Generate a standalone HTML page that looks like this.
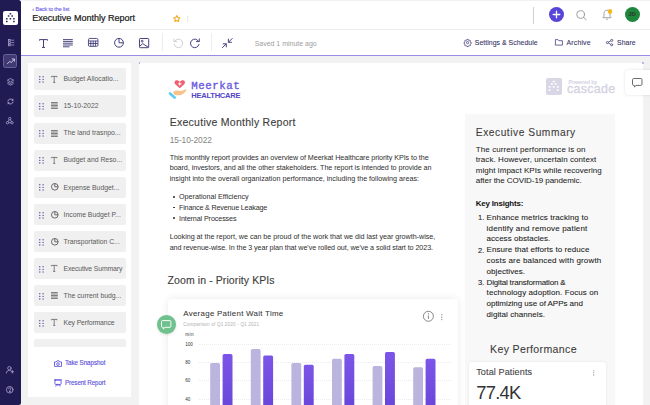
<!DOCTYPE html>
<html><head><meta charset="utf-8"><style>
html,body{margin:0;padding:0;}
body{width:650px;height:405px;overflow:hidden;position:relative;background:#f2f2f2;font-family:"Liberation Sans",sans-serif;}
</style></head><body>
<div style="position:absolute;left:0px;top:0px;width:650px;height:55.5px;background:#ffffff"></div>
<div style="position:absolute;left:21px;top:28.6px;width:629px;height:0.8px;background:#ececec"></div>
<div style="position:absolute;left:21px;top:0px;width:629px;height:0.8px;background:#f1f1f1"></div>
<div style="position:absolute;left:21px;top:55.1px;width:629px;height:1.0px;background:#988de2"></div>
<div style="position:absolute;left:0px;top:0px;width:21.2px;height:405px;background:#211b54;border-radius:0 2.5px 2.5px 0"></div>
<div style="position:absolute;left:28.2px;top:62.7px;width:103.0px;height:334.3px;background:#ffffff"></div>
<div style="position:absolute;left:138.7px;top:62.5px;width:504.3px;height:343px;background:#ffffff"></div>
<div style="position:absolute;left:138.6px;top:62.4px;width:1.6px;height:1.6px;background:#a79cf0;border-radius:1px"></div>
<div style="position:absolute;left:642.2px;top:62.4px;width:1.6px;height:1.6px;background:#a79cf0;border-radius:1px"></div>
<div style="position:absolute;left:3px;top:10.7px;width:14.8px;height:14.5px;background:#fff;border-radius:2px"></div>
<svg style="position:absolute;left:0px;top:0px;overflow:visible" width="21" height="30" viewBox="0 0 21 30"><rect x="9.6" y="13.100000000000001" width="1.6" height="1.4" fill="#211b54"/><rect x="7.8" y="15.3" width="1.6" height="1.4" fill="#211b54"/><rect x="11.399999999999999" y="15.3" width="1.6" height="1.4" fill="#211b54"/><rect x="6.0" y="18.1" width="1.6" height="1.4" fill="#211b54"/><rect x="9.6" y="18.1" width="1.6" height="1.4" fill="#211b54"/><rect x="13.1" y="18.1" width="1.6" height="1.4" fill="#211b54"/><rect x="6.0" y="20.8" width="1.6" height="1.4" fill="#211b54"/><rect x="13.1" y="20.8" width="1.6" height="1.4" fill="#211b54"/></svg>
<svg style="position:absolute;left:7.6px;top:39px;overflow:visible" width="6.4" height="7.2" viewBox="0 0 6.4 7.2"><g fill="none" stroke="#aaa6cf" stroke-width="0.75"><rect x="0.4" y="0.4" width="1.9" height="1.6"/><rect x="0.4" y="2.8" width="1.9" height="1.6"/><rect x="0.4" y="5.2" width="1.9" height="1.6"/><path d="M3.2 1.2H6.2M3.2 3.6H6.2M3.2 6H6.2"/></g></svg>
<div style="position:absolute;left:3.3px;top:54px;width:13.4px;height:13.8px;background:#403a73;border:0.8px solid #66619a;box-sizing:border-box;border-radius:2.2px"></div>
<svg style="position:absolute;left:6.5px;top:57.5px;overflow:visible" width="8" height="6.5" viewBox="0 0 8 6.5"><g fill="none" stroke="#d8d5ee" stroke-width="0.9" stroke-linecap="round" stroke-linejoin="round"><path d="M0.5 5.6L2.8 3.3L4.3 4.6L7.3 1.2"/><path d="M5.2 1H7.4V3.2"/></g></svg>
<svg style="position:absolute;left:6.5px;top:77.5px;overflow:visible" width="7" height="7.5" viewBox="0 0 7 7.5"><g fill="none" stroke="#aaa6cf" stroke-width="0.8" stroke-linejoin="round"><path d="M3.5 0.5L6.6 2.2L3.5 3.9L0.4 2.2Z"/><path d="M0.4 3.9L3.5 5.6L6.6 3.9"/><path d="M0.4 5.5L3.5 7.2L6.6 5.5"/></g></svg>
<svg style="position:absolute;left:6.5px;top:97.5px;overflow:visible" width="7" height="7" viewBox="0 0 7 7"><g fill="none" stroke="#aaa6cf" stroke-width="0.85" stroke-linecap="round"><path d="M0.9 3.1A2.7 2.7 0 0 1 5.6 1.9"/><path d="M6.1 3.9A2.7 2.7 0 0 1 1.4 5.1"/></g><g fill="#aaa6cf"><path d="M6.3 0.6V3L4.2 2.3Z"/><path d="M0.7 6.4V4L2.8 4.7Z"/></g></svg>
<svg style="position:absolute;left:6.3px;top:117.3px;overflow:visible" width="7.5" height="7.5" viewBox="0 0 7.5 7.5"><g fill="none" stroke="#aaa6cf" stroke-width="0.8"><circle cx="3.75" cy="1.6" r="1.2"/><circle cx="1.5" cy="5.7" r="1.2"/><circle cx="6" cy="5.7" r="1.2"/><path d="M3.2 2.7L2.1 4.6M4.3 2.7L5.4 4.6M2.7 5.7H4.8"/></g></svg>
<svg style="position:absolute;left:5.5px;top:366.3px;overflow:visible" width="8" height="7.5" viewBox="0 0 8 7.5"><g fill="none" stroke="#aaa6cf" stroke-width="0.8" stroke-linecap="round"><circle cx="3.4" cy="2.2" r="1.7"/><path d="M0.4 7C0.6 5 1.8 4.4 3.4 4.4C4.3 4.4 5 4.6 5.4 5"/><path d="M6.4 4.6V7M5.2 5.8H7.6"/></g></svg>
<svg style="position:absolute;left:5.6px;top:386.2px;overflow:visible" width="7.5" height="7.5" viewBox="0 0 7.5 7.5"><g fill="none" stroke="#aaa6cf" stroke-width="0.8" stroke-linecap="round"><circle cx="3.75" cy="3.75" r="3.3"/><path d="M2.7 2.8C2.7 2 3.2 1.7 3.8 1.7C4.4 1.7 4.9 2.1 4.9 2.7C4.9 3.5 3.8 3.6 3.8 4.5"/><circle cx="3.8" cy="5.7" r="0.3" fill="#aaa6cf"/></g></svg>
<svg style="position:absolute;left:173.2px;top:14.6px;overflow:visible" width="7.6" height="7.4" viewBox="0 0 7.6 7.4"><path d="M3.8 0.6L4.75 2.55L6.9 2.85L5.35 4.35L5.72 6.5L3.8 5.48L1.88 6.5L2.25 4.35L0.7 2.85L2.85 2.55Z" fill="none" stroke="#f4a91f" stroke-width="1.05" stroke-linejoin="round"/></svg>
<svg style="position:absolute;left:187px;top:15.5px;overflow:visible" width="1.6" height="6" viewBox="0 0 1.6 6"><g fill="#c4c4c4"><circle cx="0.8" cy="0.8" r="0.55"/><circle cx="0.8" cy="2.8" r="0.55"/><circle cx="0.8" cy="4.8" r="0.55"/></g></svg>
<div style="position:absolute;left:533.3px;top:7px;width:0.8px;height:16.6px;background:#cfcfcf"></div>
<div style="position:absolute;left:549px;top:7.3px;width:15px;height:15px;border-radius:50%;background:#5744d8"></div>
<svg style="position:absolute;left:549px;top:7.3px;overflow:visible" width="15" height="15" viewBox="0 0 15 15"><path d="M7.5 4.2V10.8M4.2 7.5H10.8" stroke="#fff" stroke-width="1.3" stroke-linecap="round"/></svg>
<svg style="position:absolute;left:576.4px;top:9.6px;overflow:visible" width="11" height="10.2" viewBox="0 0 11 10.2"><g fill="none" stroke="#8e8e8e" stroke-width="0.85" stroke-linecap="round"><circle cx="4.6" cy="4.5" r="3.9"/><path d="M7.5 7.3L10.1 9.7"/></g></svg>
<svg style="position:absolute;left:601.8px;top:9.4px;overflow:visible" width="11" height="11.5" viewBox="0 0 11 11.5"><g fill="none" stroke="#9a9a9a" stroke-width="0.9" stroke-linejoin="round"><path d="M5 1.2C3 1.2 2 2.8 2 4.6V7.3L0.9 8.7H9.1L8 7.3V4.6C8 2.8 7 1.2 5 1.2Z"/><path d="M3.9 9.8C4.2 10.5 5.8 10.5 6.1 9.8"/></g></svg>
<div style="position:absolute;left:608.3px;top:9.4px;width:4.2px;height:4.2px;border-radius:50%;background:#f6b515"></div>
<div style="position:absolute;left:625px;top:7.3px;width:15px;height:15px;border-radius:50%;background:#1f873b"></div>
<svg style="position:absolute;left:38.5px;top:38.5px;overflow:visible" width="9" height="9" viewBox="0 0 9 9"><g fill="none" stroke="#45417a" stroke-width="1"><path d="M0.5 1.6V0.6H8.5V1.6"/><path d="M4.5 0.6V8.4"/><path d="M3 8.4H6"/></g></svg>
<svg style="position:absolute;left:63.2px;top:38.8px;overflow:visible" width="10" height="8.5" viewBox="0 0 10 8.5"><g stroke="#45417a" stroke-width="0.95"><path d="M0 0.6H9.8M0 2.4H9.8M0 4.2H9.8M0 6H9.8M0 7.8H6.5"/></g></svg>
<svg style="position:absolute;left:88.4px;top:38.3px;overflow:visible" width="10.4" height="8.8" viewBox="0 0 10.4 8.8"><g fill="none" stroke="#45417a" stroke-width="0.9"><rect x="0.45" y="0.45" width="9.5" height="7.9" rx="1.3"/><path d="M0.5 3.0H9.9M0.5 5.5H9.9M2.8 3V8.3M5.2 3V8.3M7.6 3V8.3"/></g></svg>
<svg style="position:absolute;left:113.9px;top:38.4px;overflow:visible" width="10" height="9.5" viewBox="0 0 10 9.5"><g fill="none" stroke="#45417a" stroke-width="1"><circle cx="5" cy="4.8" r="4.4"/><path d="M5 0.4V4.8H9.4"/></g></svg>
<svg style="position:absolute;left:139.2px;top:38px;overflow:visible" width="10.2" height="10.2" viewBox="0 0 10.2 10.2"><g fill="none" stroke="#45417a" stroke-width="1"><rect x="0.5" y="0.5" width="9.2" height="9.2" rx="0.8"/><circle cx="3.2" cy="3.2" r="0.9"/><path d="M0.8 8.2L3.8 5.6L6 7.2L9.4 9.2"/></g></svg>
<div style="position:absolute;left:162.4px;top:33.4px;width:0.7px;height:17.6px;background:#ededed"></div>
<svg style="position:absolute;left:172.7px;top:38px;overflow:visible" width="10" height="10" viewBox="0 0 10 10"><g fill="none" stroke="#cfcfcf" stroke-width="1" stroke-linecap="round"><path d="M1.6 3.3A4.3 4.3 0 1 1 1.2 6.5"/><path d="M0.9 0.9V3.6H3.6"/></g></svg>
<svg style="position:absolute;left:190px;top:38px;overflow:visible" width="10.4" height="10" viewBox="0 0 10.4 10"><g fill="none" stroke="#45417a" stroke-width="1" stroke-linecap="round"><path d="M8.6 3.3A4.3 4.3 0 1 0 9 6.5"/><path d="M9.3 0.9V3.6H6.6"/></g></svg>
<div style="position:absolute;left:211.3px;top:33.4px;width:0.7px;height:17.2px;background:#ededed"></div>
<svg style="position:absolute;left:222px;top:37.7px;overflow:visible" width="10.7" height="10.1" viewBox="0 0 10.7 10.1"><g fill="none" stroke="#45417a" stroke-width="1" stroke-linecap="round"><path d="M10.2 0.5L6.6 4.1M6.4 1.2V4.3H9.5"/><path d="M0.5 9.6L4.1 6M1.2 5.8H4.3V8.9"/></g></svg>
<svg style="position:absolute;left:463.6px;top:38.9px;overflow:visible" width="7.2" height="7.2" viewBox="0 0 7.2 7.2"><g fill="none" stroke="#45417a" stroke-width="0.8"><circle cx="3.6" cy="3.6" r="1.1"/><path d="M3 0.4H4.2L4.4 1.2L5.1 1.5L5.8 1.1L6.6 1.9L6.2 2.6L6.5 3.3L7.2 3.5V4.6L6.5 4.8L6.2 5.5L6.6 6.2L5.8 7L5.1 6.6L4.4 6.9L4.2 7.6H3L2.8 6.9L2.1 6.6L1.4 7L0.6 6.2L1 5.5L0.7 4.8L0 4.6V3.5L0.7 3.3L1 2.6L0.6 1.9L1.4 1.1L2.1 1.5L2.8 1.2Z"/></g></svg>
<svg style="position:absolute;left:555.3px;top:39.1px;overflow:visible" width="7.8" height="6.6" viewBox="0 0 7.8 6.6"><g fill="none" stroke="#45417a" stroke-width="0.8" stroke-linejoin="round"><path d="M0.4 0.6H2.9L3.8 1.7H7.4V6.1H0.4Z"/></g></svg>
<svg style="position:absolute;left:606px;top:38.9px;overflow:visible" width="7.2" height="7.2" viewBox="0 0 7.2 7.2"><g fill="none" stroke="#45417a" stroke-width="0.8"><circle cx="5.7" cy="1.4" r="1.05"/><circle cx="1.4" cy="3.6" r="1.05"/><circle cx="5.7" cy="5.8" r="1.05"/><path d="M2.4 3.1L4.7 1.9M2.4 4.1L4.7 5.3"/></g></svg>
<div style="position:absolute;left:33.8px;top:68.3px;width:92.4px;height:21.3px;background:#f0f0f0;border-radius:2px"></div>
<svg style="position:absolute;left:38.9px;top:76.0px;overflow:visible" width="5" height="7" viewBox="0 0 5 7"><g fill="#5f59a3"><circle cx="0.75" cy="0.75" r="0.72"/><circle cx="0.75" cy="3.4" r="0.72"/><circle cx="0.75" cy="6.05" r="0.72"/><circle cx="4.1" cy="0.75" r="0.72"/><circle cx="4.1" cy="3.4" r="0.72"/><circle cx="4.1" cy="6.05" r="0.72"/></g></svg>
<svg style="position:absolute;left:51.2px;top:75.5px;overflow:visible" width="6.4" height="6.8" viewBox="0 0 6.4 6.8"><g fill="none" stroke="#5a5a5a" stroke-width="0.75"><path d="M0.4 1.3V0.4H6V1.3M3.2 0.4V6.4M2.1 6.4H4.3"/></g></svg>
<div style="position:absolute;left:33.8px;top:95.4px;width:92.4px;height:21.3px;background:#f0f0f0;border-radius:2px"></div>
<svg style="position:absolute;left:38.9px;top:103.1px;overflow:visible" width="5" height="7" viewBox="0 0 5 7"><g fill="#5f59a3"><circle cx="0.75" cy="0.75" r="0.72"/><circle cx="0.75" cy="3.4" r="0.72"/><circle cx="0.75" cy="6.05" r="0.72"/><circle cx="4.1" cy="0.75" r="0.72"/><circle cx="4.1" cy="3.4" r="0.72"/><circle cx="4.1" cy="6.05" r="0.72"/></g></svg>
<svg style="position:absolute;left:51.0px;top:102.4px;overflow:visible" width="6.8" height="7.0" viewBox="0 0 6.8 7.0"><g stroke="#5a5a5a" stroke-width="0.75"><path d="M0 0.5H6.8M0 2H6.8M0 3.5H6.8M0 5H6.8M0 6.5H6.8"/></g></svg>
<div style="position:absolute;left:33.8px;top:122.5px;width:92.4px;height:21.3px;background:#f0f0f0;border-radius:2px"></div>
<svg style="position:absolute;left:38.9px;top:130.2px;overflow:visible" width="5" height="7" viewBox="0 0 5 7"><g fill="#5f59a3"><circle cx="0.75" cy="0.75" r="0.72"/><circle cx="0.75" cy="3.4" r="0.72"/><circle cx="0.75" cy="6.05" r="0.72"/><circle cx="4.1" cy="0.75" r="0.72"/><circle cx="4.1" cy="3.4" r="0.72"/><circle cx="4.1" cy="6.05" r="0.72"/></g></svg>
<svg style="position:absolute;left:51.0px;top:129.5px;overflow:visible" width="6.8" height="7.0" viewBox="0 0 6.8 7.0"><g stroke="#5a5a5a" stroke-width="0.75"><path d="M0 0.5H6.8M0 2H6.8M0 3.5H6.8M0 5H6.8M0 6.5H6.8"/></g></svg>
<div style="position:absolute;left:33.8px;top:149.6px;width:92.4px;height:21.3px;background:#f0f0f0;border-radius:2px"></div>
<svg style="position:absolute;left:38.9px;top:157.3px;overflow:visible" width="5" height="7" viewBox="0 0 5 7"><g fill="#5f59a3"><circle cx="0.75" cy="0.75" r="0.72"/><circle cx="0.75" cy="3.4" r="0.72"/><circle cx="0.75" cy="6.05" r="0.72"/><circle cx="4.1" cy="0.75" r="0.72"/><circle cx="4.1" cy="3.4" r="0.72"/><circle cx="4.1" cy="6.05" r="0.72"/></g></svg>
<svg style="position:absolute;left:51.2px;top:156.8px;overflow:visible" width="6.4" height="6.8" viewBox="0 0 6.4 6.8"><g fill="none" stroke="#5a5a5a" stroke-width="0.75"><path d="M0.4 1.3V0.4H6V1.3M3.2 0.4V6.4M2.1 6.4H4.3"/></g></svg>
<div style="position:absolute;left:33.8px;top:176.7px;width:92.4px;height:21.3px;background:#f0f0f0;border-radius:2px"></div>
<svg style="position:absolute;left:38.9px;top:184.4px;overflow:visible" width="5" height="7" viewBox="0 0 5 7"><g fill="#5f59a3"><circle cx="0.75" cy="0.75" r="0.72"/><circle cx="0.75" cy="3.4" r="0.72"/><circle cx="0.75" cy="6.05" r="0.72"/><circle cx="4.1" cy="0.75" r="0.72"/><circle cx="4.1" cy="3.4" r="0.72"/><circle cx="4.1" cy="6.05" r="0.72"/></g></svg>
<svg style="position:absolute;left:50.6px;top:183.4px;overflow:visible" width="7.6" height="7.6" viewBox="0 0 7.6 7.6"><g fill="none" stroke="#5a5a5a" stroke-width="0.9"><circle cx="3.8" cy="3.8" r="3.3"/><path d="M3.8 0.5V3.8H7.1"/></g></svg>
<div style="position:absolute;left:33.8px;top:203.8px;width:92.4px;height:21.3px;background:#f0f0f0;border-radius:2px"></div>
<svg style="position:absolute;left:38.9px;top:211.5px;overflow:visible" width="5" height="7" viewBox="0 0 5 7"><g fill="#5f59a3"><circle cx="0.75" cy="0.75" r="0.72"/><circle cx="0.75" cy="3.4" r="0.72"/><circle cx="0.75" cy="6.05" r="0.72"/><circle cx="4.1" cy="0.75" r="0.72"/><circle cx="4.1" cy="3.4" r="0.72"/><circle cx="4.1" cy="6.05" r="0.72"/></g></svg>
<svg style="position:absolute;left:50.6px;top:210.5px;overflow:visible" width="7.6" height="7.6" viewBox="0 0 7.6 7.6"><g fill="none" stroke="#5a5a5a" stroke-width="0.9"><circle cx="3.8" cy="3.8" r="3.3"/><path d="M3.8 0.5V3.8H7.1"/></g></svg>
<div style="position:absolute;left:33.8px;top:230.9px;width:92.4px;height:21.3px;background:#f0f0f0;border-radius:2px"></div>
<svg style="position:absolute;left:38.9px;top:238.6px;overflow:visible" width="5" height="7" viewBox="0 0 5 7"><g fill="#5f59a3"><circle cx="0.75" cy="0.75" r="0.72"/><circle cx="0.75" cy="3.4" r="0.72"/><circle cx="0.75" cy="6.05" r="0.72"/><circle cx="4.1" cy="0.75" r="0.72"/><circle cx="4.1" cy="3.4" r="0.72"/><circle cx="4.1" cy="6.05" r="0.72"/></g></svg>
<svg style="position:absolute;left:50.6px;top:237.6px;overflow:visible" width="7.6" height="7.6" viewBox="0 0 7.6 7.6"><g fill="none" stroke="#5a5a5a" stroke-width="0.9"><circle cx="3.8" cy="3.8" r="3.3"/><path d="M3.8 0.5V3.8H7.1"/></g></svg>
<div style="position:absolute;left:33.8px;top:258.0px;width:92.4px;height:21.3px;background:#f0f0f0;border-radius:2px"></div>
<svg style="position:absolute;left:38.9px;top:265.7px;overflow:visible" width="5" height="7" viewBox="0 0 5 7"><g fill="#5f59a3"><circle cx="0.75" cy="0.75" r="0.72"/><circle cx="0.75" cy="3.4" r="0.72"/><circle cx="0.75" cy="6.05" r="0.72"/><circle cx="4.1" cy="0.75" r="0.72"/><circle cx="4.1" cy="3.4" r="0.72"/><circle cx="4.1" cy="6.05" r="0.72"/></g></svg>
<svg style="position:absolute;left:51.2px;top:265.2px;overflow:visible" width="6.4" height="6.8" viewBox="0 0 6.4 6.8"><g fill="none" stroke="#5a5a5a" stroke-width="0.75"><path d="M0.4 1.3V0.4H6V1.3M3.2 0.4V6.4M2.1 6.4H4.3"/></g></svg>
<div style="position:absolute;left:33.8px;top:285.1px;width:92.4px;height:21.3px;background:#f0f0f0;border-radius:2px"></div>
<svg style="position:absolute;left:38.9px;top:292.8px;overflow:visible" width="5" height="7" viewBox="0 0 5 7"><g fill="#5f59a3"><circle cx="0.75" cy="0.75" r="0.72"/><circle cx="0.75" cy="3.4" r="0.72"/><circle cx="0.75" cy="6.05" r="0.72"/><circle cx="4.1" cy="0.75" r="0.72"/><circle cx="4.1" cy="3.4" r="0.72"/><circle cx="4.1" cy="6.05" r="0.72"/></g></svg>
<svg style="position:absolute;left:51.0px;top:292.1px;overflow:visible" width="6.8" height="7.0" viewBox="0 0 6.8 7.0"><g stroke="#5a5a5a" stroke-width="0.75"><path d="M0 0.5H6.8M0 2H6.8M0 3.5H6.8M0 5H6.8M0 6.5H6.8"/></g></svg>
<div style="position:absolute;left:33.8px;top:312.2px;width:92.4px;height:21.3px;background:#f0f0f0;border-radius:2px"></div>
<svg style="position:absolute;left:38.9px;top:319.9px;overflow:visible" width="5" height="7" viewBox="0 0 5 7"><g fill="#5f59a3"><circle cx="0.75" cy="0.75" r="0.72"/><circle cx="0.75" cy="3.4" r="0.72"/><circle cx="0.75" cy="6.05" r="0.72"/><circle cx="4.1" cy="0.75" r="0.72"/><circle cx="4.1" cy="3.4" r="0.72"/><circle cx="4.1" cy="6.05" r="0.72"/></g></svg>
<svg style="position:absolute;left:51.2px;top:319.4px;overflow:visible" width="6.4" height="6.8" viewBox="0 0 6.4 6.8"><g fill="none" stroke="#5a5a5a" stroke-width="0.75"><path d="M0.4 1.3V0.4H6V1.3M3.2 0.4V6.4M2.1 6.4H4.3"/></g></svg>
<div style="position:absolute;left:33.8px;top:339.3px;width:92.4px;height:7.4px;background:#f0f0f0;border-radius:2px 2px 0 0"></div>
<svg style="position:absolute;left:53.8px;top:359.5px;overflow:visible" width="8" height="7" viewBox="0 0 8 7"><g fill="none" stroke="#5b4fd9" stroke-width="0.85" stroke-linejoin="round"><path d="M0.5 2H2.2L3 0.8H5L5.8 2H7.5V6.4H0.5Z"/><circle cx="4" cy="4.1" r="1.3"/></g></svg>
<svg style="position:absolute;left:53.8px;top:378.6px;overflow:visible" width="8" height="7.8" viewBox="0 0 8 7.8"><g fill="none" stroke="#5b4fd9" stroke-width="0.85" stroke-linejoin="round" stroke-linecap="round"><rect x="0.9" y="1.0" width="6.2" height="4.4" rx="0.5"/><path d="M0.3 0.9H7.7M2.6 5.4L1.9 7.2M5.4 5.4L6.1 7.2M4 5.4V6.6"/></g></svg>
<svg style="position:absolute;left:167px;top:78.5px;overflow:visible" width="21" height="21" viewBox="0 0 21 21"><path d="M12.75 9.2L8.5 5.4C7.2 4.2 7.2 2.3 8.6 1.5C10.1 0.8 11.7 1.5 12.75 2.7C13.8 1.5 15.4 0.8 16.9 1.5C18.3 2.3 18.3 4.2 17 5.4Z" fill="#f25f70"/><path d="M12.75 2.5L13.45 4.2L15.1 4.9L13.45 5.6L12.75 7.3L12.05 5.6L10.4 4.9L12.05 4.2Z" fill="#eef6ff"/><path d="M5.9 13.4C7.4 11.4 9.9 11.0 12 11.8L14.4 12.0C16.1 11.6 17.8 10.8 19.4 10.1C19.7 11.5 17.6 14.7 14.2 15.9C12 16.5 9.6 16.5 7.6 15.7Z" fill="#f8c28b"/><path d="M3.0 14.4L7.6 18.6" stroke="#5ccdf3" stroke-width="2.7" stroke-linecap="round"/></svg>
<div style="position:absolute;left:545.8px;top:78px;width:15.8px;height:17px;background:#d9d7e6;border-radius:2px"></div>
<svg style="position:absolute;left:0px;top:0px;overflow:visible" width="650" height="100" viewBox="0 0 650 100"><rect x="552.8000000000001" y="80.8" width="1.8" height="1.6" fill="#fff"/><rect x="550.9" y="83.2" width="1.8" height="1.6" fill="#fff"/><rect x="554.7" y="83.2" width="1.8" height="1.6" fill="#fff"/><rect x="548.7" y="86.10000000000001" width="1.8" height="1.6" fill="#fff"/><rect x="552.8000000000001" y="86.10000000000001" width="1.8" height="1.6" fill="#fff"/><rect x="556.9" y="86.10000000000001" width="1.8" height="1.6" fill="#fff"/><rect x="548.7" y="89.3" width="1.8" height="1.6" fill="#fff"/><rect x="556.9" y="89.3" width="1.8" height="1.6" fill="#fff"/></svg>
<div style="position:absolute;left:625.2px;top:70.4px;width:30px;height:25px;background:#fff;border-radius:4px 0 0 4px;box-shadow:0 0 3px rgba(0,0,0,0.12)"></div>
<svg style="position:absolute;left:632.4px;top:77.8px;overflow:visible" width="10.5" height="9.8" viewBox="0 0 10.5 9.8"><path d="M1.6 0.5H8.9C9.5 0.5 10 1 10 1.6V6.3C10 6.9 9.5 7.4 8.9 7.4H4L2.4 9V7.4H1.6C1 7.4 0.5 6.9 0.5 6.3V1.6C0.5 1 1 0.5 1.6 0.5Z" fill="none" stroke="#5a5a5a" stroke-width="0.9" stroke-linejoin="round"/></svg>
<div style="position:absolute;left:172.7px;top:195.79999999999998px;width:1.9px;height:1.9px;border-radius:50%;background:#2a2a2a"></div>
<div style="position:absolute;left:172.7px;top:206.6px;width:1.9px;height:1.9px;border-radius:50%;background:#2a2a2a"></div>
<div style="position:absolute;left:172.7px;top:217.4px;width:1.9px;height:1.9px;border-radius:50%;background:#2a2a2a"></div>
<div style="position:absolute;left:167.5px;top:299.2px;width:290.2px;height:120px;background:#fff;border-radius:4px;box-shadow:0 0 8px rgba(0,0,0,0.09)"></div>
<div style="position:absolute;left:157px;top:314.8px;width:19.2px;height:19.2px;border-radius:50%;background:#6fc18d;box-shadow:0 1px 3px rgba(0,0,0,0.12)"></div>
<svg style="position:absolute;left:161.3px;top:319.5px;overflow:visible" width="10.5" height="10" viewBox="0 0 10.5 10"><path d="M1.4 0.6H9C9.5 0.6 9.9 1 9.9 1.5V6.4C9.9 6.9 9.5 7.3 9 7.3H4.1L2.3 9V7.3H1.4C0.9 7.3 0.5 6.9 0.5 6.4V1.5C0.5 1 0.9 0.6 1.4 0.6Z" fill="none" stroke="#fff" stroke-width="0.95" stroke-linejoin="round"/></svg>
<div style="position:absolute;left:199px;top:343.5px;width:252px;height:0;border-top:0.8px dotted #ececec"></div>
<div style="position:absolute;left:199px;top:362.0px;width:252px;height:0;border-top:0.8px dotted #ececec"></div>
<div style="position:absolute;left:199px;top:380.20000000000005px;width:252px;height:0;border-top:0.8px dotted #ececec"></div>
<div style="position:absolute;left:199px;top:398.6px;width:252px;height:0;border-top:0.8px dotted #ececec"></div>
<svg style="position:absolute;left:0;top:0" width="650" height="405"><defs><linearGradient id="gd" x1="0" y1="0" x2="0" y2="1"><stop offset="0" stop-color="#7c55e8"/><stop offset="1" stop-color="#6443d6"/></linearGradient></defs><rect x="210.20" y="363" width="9.8" height="57" rx="1.6" fill="#bab4de"/><rect x="222.60" y="354.1" width="9.9" height="65.89999999999998" rx="1.6" fill="url(#gd)"/><rect x="250.80" y="348.9" width="9.8" height="71.10000000000002" rx="1.6" fill="#bab4de"/><rect x="263.20" y="355.4" width="9.9" height="64.60000000000002" rx="1.6" fill="url(#gd)"/><rect x="291.40" y="363" width="9.8" height="57" rx="1.6" fill="#bab4de"/><rect x="303.80" y="364.8" width="9.9" height="55.19999999999999" rx="1.6" fill="url(#gd)"/><rect x="332.00" y="358.7" width="9.8" height="61.30000000000001" rx="1.6" fill="#bab4de"/><rect x="344.40" y="354" width="9.9" height="66" rx="1.6" fill="url(#gd)"/><rect x="372.60" y="366.1" width="9.8" height="53.89999999999998" rx="1.6" fill="#bab4de"/><rect x="385.00" y="352" width="9.9" height="68" rx="1.6" fill="url(#gd)"/><rect x="413.20" y="367.3" width="9.8" height="52.69999999999999" rx="1.6" fill="#bab4de"/><rect x="425.60" y="358.8" width="9.9" height="61.19999999999999" rx="1.6" fill="url(#gd)"/></svg>
<svg style="position:absolute;left:422.6px;top:311.4px;overflow:visible" width="10.4" height="10.4" viewBox="0 0 10.4 10.4"><g fill="none" stroke="#727272" stroke-width="0.85"><circle cx="5.4" cy="5.3" r="5.0"/><path d="M5.4 4.5V8"/></g><circle cx="5.4" cy="2.9" r="0.55" fill="#727272"/></svg>
<svg style="position:absolute;left:440.7px;top:314px;overflow:visible" width="1.6" height="6.5" viewBox="0 0 1.6 6.5"><g fill="#777"><circle cx="0.8" cy="0.8" r="0.6"/><circle cx="0.8" cy="3.2" r="0.6"/><circle cx="0.8" cy="5.6" r="0.6"/></g></svg>
<div style="position:absolute;left:464.5px;top:114.3px;width:150.5px;height:300px;background:#f8f8f8"></div>
<div style="position:absolute;left:469.4px;top:361.5px;width:137.1px;height:60px;background:#fff;border-radius:3px;box-shadow:0 0 3px rgba(0,0,0,0.08)"></div>
<svg style="position:absolute;left:592.6px;top:369.6px;overflow:visible" width="1.6" height="6" viewBox="0 0 1.6 6"><g fill="#777"><circle cx="0.8" cy="0.7" r="0.55"/><circle cx="0.8" cy="2.8" r="0.55"/><circle cx="0.8" cy="4.9" r="0.55"/></g></svg>
<span style="position:absolute;left:32.3px;top:7.24px;font-family:'Liberation Sans', sans-serif;font-size:5.6px;line-height:1;font-weight:400;color:#6d5fe6;white-space:nowrap;letter-spacing:-0.162px;-webkit-text-stroke:0.1px currentColor">‹ Back to the list</span>
<span style="position:absolute;left:32.3px;top:13.75px;font-family:'Liberation Sans', sans-serif;font-size:9.0px;line-height:1;font-weight:400;color:#1a1a1a;white-space:nowrap;letter-spacing:0.008px;-webkit-text-stroke:0.22px currentColor">Executive Monthly Report</span>
<span style="position:absolute;left:254.7px;top:40.35px;font-family:'Liberation Sans', sans-serif;font-size:7.0px;line-height:1;font-weight:400;color:#9d9d9d;white-space:nowrap;letter-spacing:-0.018px;">Saved 1 minute ago</span>
<span style="position:absolute;left:474.8px;top:40.03px;font-family:'Liberation Sans', sans-serif;font-size:6.9px;line-height:1;font-weight:400;color:#3b3868;white-space:nowrap;letter-spacing:0.038px;-webkit-text-stroke:0.1px currentColor">Settings &amp; Schedule</span>
<span style="position:absolute;left:566.6px;top:40.03px;font-family:'Liberation Sans', sans-serif;font-size:6.9px;line-height:1;font-weight:400;color:#3b3868;white-space:nowrap;letter-spacing:0.161px;-webkit-text-stroke:0.1px currentColor">Archive</span>
<span style="position:absolute;left:617px;top:40.03px;font-family:'Liberation Sans', sans-serif;font-size:6.9px;line-height:1;font-weight:400;color:#3b3868;white-space:nowrap;letter-spacing:0.040px;-webkit-text-stroke:0.1px currentColor">Share</span>
<span style="position:absolute;left:628.6px;top:12.05px;font-family:'Liberation Sans', sans-serif;font-size:5.7px;line-height:1;font-weight:700;color:#2b3f2f;white-space:nowrap;letter-spacing:0.000px;-webkit-text-stroke:0.15px currentColor">JD</span>
<span style="position:absolute;left:63.5px;top:76.18px;font-family:'Liberation Sans', sans-serif;font-size:6.85px;line-height:1;font-weight:400;color:#5a5a5a;white-space:nowrap;letter-spacing:0.014px;">Budget Allocatio...</span>
<span style="position:absolute;left:63.5px;top:103.28px;font-family:'Liberation Sans', sans-serif;font-size:6.85px;line-height:1;font-weight:400;color:#5a5a5a;white-space:nowrap;letter-spacing:0.000px;">15-10-2022</span>
<span style="position:absolute;left:63.5px;top:130.38px;font-family:'Liberation Sans', sans-serif;font-size:6.85px;line-height:1;font-weight:400;color:#5a5a5a;white-space:nowrap;letter-spacing:0.000px;">The land trasnpo...</span>
<span style="position:absolute;left:63.5px;top:157.48px;font-family:'Liberation Sans', sans-serif;font-size:6.85px;line-height:1;font-weight:400;color:#5a5a5a;white-space:nowrap;letter-spacing:0.000px;">Budget and Reso...</span>
<span style="position:absolute;left:63.5px;top:184.58px;font-family:'Liberation Sans', sans-serif;font-size:6.85px;line-height:1;font-weight:400;color:#5a5a5a;white-space:nowrap;letter-spacing:0.000px;">Expense Budget...</span>
<span style="position:absolute;left:63.5px;top:211.68px;font-family:'Liberation Sans', sans-serif;font-size:6.85px;line-height:1;font-weight:400;color:#5a5a5a;white-space:nowrap;letter-spacing:0.000px;">Income Budget P...</span>
<span style="position:absolute;left:63.5px;top:238.78px;font-family:'Liberation Sans', sans-serif;font-size:6.85px;line-height:1;font-weight:400;color:#5a5a5a;white-space:nowrap;letter-spacing:0.000px;">Transportation C...</span>
<span style="position:absolute;left:63.5px;top:265.88px;font-family:'Liberation Sans', sans-serif;font-size:6.85px;line-height:1;font-weight:400;color:#5a5a5a;white-space:nowrap;letter-spacing:-0.126px;">Executive Summary</span>
<span style="position:absolute;left:63.5px;top:292.98px;font-family:'Liberation Sans', sans-serif;font-size:6.85px;line-height:1;font-weight:400;color:#5a5a5a;white-space:nowrap;letter-spacing:0.000px;">The current budg...</span>
<span style="position:absolute;left:63.5px;top:320.08px;font-family:'Liberation Sans', sans-serif;font-size:6.85px;line-height:1;font-weight:400;color:#5a5a5a;white-space:nowrap;letter-spacing:-0.130px;">Key Performance</span>
<span style="position:absolute;left:65px;top:360.34px;font-family:'Liberation Sans', sans-serif;font-size:6.3px;line-height:1;font-weight:400;color:#5b4fd9;white-space:nowrap;letter-spacing:-0.097px;-webkit-text-stroke:0.12px currentColor">Take Snapshot</span>
<span style="position:absolute;left:65px;top:379.54px;font-family:'Liberation Sans', sans-serif;font-size:6.3px;line-height:1;font-weight:400;color:#5b4fd9;white-space:nowrap;letter-spacing:-0.143px;-webkit-text-stroke:0.12px currentColor">Present Report</span>
<span style="position:absolute;left:191.2px;top:81.32px;font-family:'Liberation Mono', monospace;font-size:10.8px;line-height:1;font-weight:400;color:#6a5ae0;white-space:nowrap;letter-spacing:0.551px;-webkit-text-stroke:0.35px currentColor">Meerkat</span>
<span style="position:absolute;left:191.2px;top:92.14px;font-family:'Liberation Sans', sans-serif;font-size:7.6px;line-height:1;font-weight:700;color:#5447c9;white-space:nowrap;letter-spacing:-0.260px;">HEALTHCARE</span>
<span style="position:absolute;left:169.7px;top:116.78px;font-family:'Liberation Sans', sans-serif;font-size:10.5px;line-height:1;font-weight:400;color:#3d3d3d;white-space:nowrap;letter-spacing:0.265px;-webkit-text-stroke:0.12px currentColor">Executive Monthly Report</span>
<span style="position:absolute;left:169.7px;top:136.26px;font-family:'Liberation Sans', sans-serif;font-size:8.4px;line-height:1;font-weight:400;color:#858585;white-space:nowrap;letter-spacing:-0.064px;">15-10-2022</span>
<span style="position:absolute;left:169.7px;top:153.78px;font-family:'Liberation Sans', sans-serif;font-size:7.2px;line-height:1;font-weight:400;color:#2e2e2e;white-space:nowrap;letter-spacing:-0.066px;">This monthly report provides an overview of Meerkat Healthcare priority KPIs to the</span>
<span style="position:absolute;left:169.7px;top:164.48px;font-family:'Liberation Sans', sans-serif;font-size:7.2px;line-height:1;font-weight:400;color:#2e2e2e;white-space:nowrap;letter-spacing:-0.058px;">board, investors, and all the other stakeholders. The report is intended to provide an</span>
<span style="position:absolute;left:169.7px;top:175.28px;font-family:'Liberation Sans', sans-serif;font-size:7.2px;line-height:1;font-weight:400;color:#2e2e2e;white-space:nowrap;letter-spacing:0.001px;">insight into the overall organization performance, including the following areas:</span>
<span style="position:absolute;left:179px;top:193.08px;font-family:'Liberation Sans', sans-serif;font-size:7.2px;line-height:1;font-weight:400;color:#2e2e2e;white-space:nowrap;letter-spacing:-0.011px;">Operational Efficiency</span>
<span style="position:absolute;left:179px;top:203.88px;font-family:'Liberation Sans', sans-serif;font-size:7.2px;line-height:1;font-weight:400;color:#2e2e2e;white-space:nowrap;letter-spacing:-0.185px;">Finance &amp; Revenue Leakage</span>
<span style="position:absolute;left:179px;top:214.68px;font-family:'Liberation Sans', sans-serif;font-size:7.2px;line-height:1;font-weight:400;color:#2e2e2e;white-space:nowrap;letter-spacing:-0.115px;">Internal Processes</span>
<span style="position:absolute;left:169.7px;top:233.18px;font-family:'Liberation Sans', sans-serif;font-size:7.2px;line-height:1;font-weight:400;color:#2e2e2e;white-space:nowrap;letter-spacing:-0.035px;">Looking at the report, we can be proud of the work that we did last year growth-wise,</span>
<span style="position:absolute;left:169.7px;top:243.88px;font-family:'Liberation Sans', sans-serif;font-size:7.2px;line-height:1;font-weight:400;color:#2e2e2e;white-space:nowrap;letter-spacing:-0.086px;">and revenue-wise. In the 3 year plan that we've rolled out, we've a solid start to 2023.</span>
<span style="position:absolute;left:167.6px;top:274.68px;font-family:'Liberation Sans', sans-serif;font-size:10.5px;line-height:1;font-weight:400;color:#3d3d3d;white-space:nowrap;letter-spacing:0.091px;-webkit-text-stroke:0.12px currentColor">Zoom in - Priority KPIs</span>
<span style="position:absolute;left:183.3px;top:309.69px;font-family:'Liberation Sans', sans-serif;font-size:7.9px;line-height:1;font-weight:400;color:#333333;white-space:nowrap;letter-spacing:0.289px;-webkit-text-stroke:0.05px currentColor">Average Patient Wait Time</span>
<span style="position:absolute;left:183.3px;top:322.59px;font-family:'Liberation Sans', sans-serif;font-size:4.6px;line-height:1;font-weight:400;color:#b0b0b0;white-space:nowrap;letter-spacing:0.176px;">Comparison of Q1 2020 - Q1 2021</span>
<span style="position:absolute;left:185.2px;top:332.59px;font-family:'Liberation Sans', sans-serif;font-size:4.6px;line-height:1;font-weight:400;color:#333333;white-space:nowrap;letter-spacing:0.431px;">min</span>
<span style="position:absolute;left:185.2px;top:342.69px;font-family:'Liberation Sans', sans-serif;font-size:4.6px;line-height:1;font-weight:400;color:#333333;white-space:nowrap;letter-spacing:0.000px;">100</span>
<span style="position:absolute;left:185.2px;top:361.19px;font-family:'Liberation Sans', sans-serif;font-size:4.6px;line-height:1;font-weight:400;color:#333333;white-space:nowrap;letter-spacing:0.000px;">80</span>
<span style="position:absolute;left:185.2px;top:379.39px;font-family:'Liberation Sans', sans-serif;font-size:4.6px;line-height:1;font-weight:400;color:#333333;white-space:nowrap;letter-spacing:0.000px;">60</span>
<span style="position:absolute;left:185.2px;top:397.79px;font-family:'Liberation Sans', sans-serif;font-size:4.6px;line-height:1;font-weight:400;color:#333333;white-space:nowrap;letter-spacing:0.000px;">40</span>
<span style="position:absolute;left:475.8px;top:127.73px;font-family:'Liberation Sans', sans-serif;font-size:10.2px;line-height:1;font-weight:400;color:#3d3d3d;white-space:nowrap;letter-spacing:0.551px;-webkit-text-stroke:0.1px currentColor">Executive Summary</span>
<span style="position:absolute;left:475.8px;top:145.90px;font-family:'Liberation Sans', sans-serif;font-size:8.0px;line-height:1;font-weight:400;color:#222222;white-space:nowrap;letter-spacing:0.092px;-webkit-text-stroke:0.04px currentColor">The current performance is on</span>
<span style="position:absolute;left:475.8px;top:156.40px;font-family:'Liberation Sans', sans-serif;font-size:8.0px;line-height:1;font-weight:400;color:#222222;white-space:nowrap;letter-spacing:0.067px;-webkit-text-stroke:0.04px currentColor">track. However, uncertain context</span>
<span style="position:absolute;left:475.8px;top:166.90px;font-family:'Liberation Sans', sans-serif;font-size:8.0px;line-height:1;font-weight:400;color:#222222;white-space:nowrap;letter-spacing:0.044px;-webkit-text-stroke:0.04px currentColor">might impact KPIs while recovering</span>
<span style="position:absolute;left:475.8px;top:177.40px;font-family:'Liberation Sans', sans-serif;font-size:8.0px;line-height:1;font-weight:400;color:#222222;white-space:nowrap;letter-spacing:-0.062px;-webkit-text-stroke:0.04px currentColor">after the COVID-19 pandemic.</span>
<span style="position:absolute;left:475.8px;top:200.28px;font-family:'Liberation Sans', sans-serif;font-size:7.9px;line-height:1;font-weight:700;color:#111111;white-space:nowrap;letter-spacing:-0.168px;">Key Insights:</span>
<span style="position:absolute;left:478.0px;top:214.14px;font-family:'Liberation Sans', sans-serif;font-size:7.6px;line-height:1;font-weight:400;color:#222222;white-space:nowrap;letter-spacing:0.000px;-webkit-text-stroke:0.08px currentColor">1.</span>
<span style="position:absolute;left:486.6px;top:213.80px;font-family:'Liberation Sans', sans-serif;font-size:8.0px;line-height:1;font-weight:400;color:#222222;white-space:nowrap;letter-spacing:0.112px;-webkit-text-stroke:0.08px currentColor">Enhance metrics tracking to</span>
<span style="position:absolute;left:486.6px;top:224.60px;font-family:'Liberation Sans', sans-serif;font-size:8.0px;line-height:1;font-weight:400;color:#222222;white-space:nowrap;letter-spacing:0.180px;-webkit-text-stroke:0.08px currentColor">identify and remove patient</span>
<span style="position:absolute;left:486.6px;top:235.40px;font-family:'Liberation Sans', sans-serif;font-size:8.0px;line-height:1;font-weight:400;color:#222222;white-space:nowrap;letter-spacing:0.031px;-webkit-text-stroke:0.08px currentColor">access obstacles.</span>
<span style="position:absolute;left:478.0px;top:246.54px;font-family:'Liberation Sans', sans-serif;font-size:7.6px;line-height:1;font-weight:400;color:#222222;white-space:nowrap;letter-spacing:0.000px;-webkit-text-stroke:0.08px currentColor">2.</span>
<span style="position:absolute;left:486.6px;top:246.20px;font-family:'Liberation Sans', sans-serif;font-size:8.0px;line-height:1;font-weight:400;color:#222222;white-space:nowrap;letter-spacing:0.069px;-webkit-text-stroke:0.08px currentColor">Ensure that efforts to reduce</span>
<span style="position:absolute;left:486.6px;top:257.00px;font-family:'Liberation Sans', sans-serif;font-size:8.0px;line-height:1;font-weight:400;color:#222222;white-space:nowrap;letter-spacing:0.165px;-webkit-text-stroke:0.08px currentColor">costs are balanced with growth</span>
<span style="position:absolute;left:486.6px;top:267.80px;font-family:'Liberation Sans', sans-serif;font-size:8.0px;line-height:1;font-weight:400;color:#222222;white-space:nowrap;letter-spacing:0.064px;-webkit-text-stroke:0.08px currentColor">objectives.</span>
<span style="position:absolute;left:478.0px;top:278.94px;font-family:'Liberation Sans', sans-serif;font-size:7.6px;line-height:1;font-weight:400;color:#222222;white-space:nowrap;letter-spacing:0.000px;-webkit-text-stroke:0.08px currentColor">3.</span>
<span style="position:absolute;left:486.6px;top:278.60px;font-family:'Liberation Sans', sans-serif;font-size:8.0px;line-height:1;font-weight:400;color:#222222;white-space:nowrap;letter-spacing:-0.179px;-webkit-text-stroke:0.08px currentColor">Digital transformation &amp;</span>
<span style="position:absolute;left:486.6px;top:289.40px;font-family:'Liberation Sans', sans-serif;font-size:8.0px;line-height:1;font-weight:400;color:#222222;white-space:nowrap;letter-spacing:0.095px;-webkit-text-stroke:0.08px currentColor">technology adoption. Focus on</span>
<span style="position:absolute;left:486.6px;top:300.20px;font-family:'Liberation Sans', sans-serif;font-size:8.0px;line-height:1;font-weight:400;color:#222222;white-space:nowrap;letter-spacing:-0.046px;-webkit-text-stroke:0.08px currentColor">optimizing use of APPs and</span>
<span style="position:absolute;left:486.6px;top:311.00px;font-family:'Liberation Sans', sans-serif;font-size:8.0px;line-height:1;font-weight:400;color:#222222;white-space:nowrap;letter-spacing:0.060px;-webkit-text-stroke:0.08px currentColor">digital channels.</span>
<span style="position:absolute;left:490px;top:343.79px;font-family:'Liberation Sans', sans-serif;font-size:10.6px;line-height:1;font-weight:400;color:#3d3d3d;white-space:nowrap;letter-spacing:0.336px;-webkit-text-stroke:0.1px currentColor">Key Performance</span>
<span style="position:absolute;left:476.2px;top:367.87px;font-family:'Liberation Sans', sans-serif;font-size:9.1px;line-height:1;font-weight:400;color:#444444;white-space:nowrap;letter-spacing:0.103px;-webkit-text-stroke:0.1px currentColor">Total Patients</span>
<span style="position:absolute;left:476.2px;top:383.96px;font-family:'Liberation Sans', sans-serif;font-size:18.4px;line-height:1;font-weight:400;color:#333333;white-space:nowrap;letter-spacing:-0.748px;">77.4K</span>
<span style="position:absolute;left:568.5px;top:79.71px;font-family:'Liberation Sans', sans-serif;font-size:5.4px;line-height:1;font-weight:700;color:#d3d2df;white-space:nowrap;letter-spacing:-0.159px;">Powered by</span>
<span style="position:absolute;left:567.1px;top:83.06px;font-family:'Liberation Sans', sans-serif;font-size:12.4px;line-height:1;font-weight:400;color:#d3d2df;white-space:nowrap;letter-spacing:0.323px;-webkit-text-stroke:0.3px currentColor">cascade</span>
</body></html>
